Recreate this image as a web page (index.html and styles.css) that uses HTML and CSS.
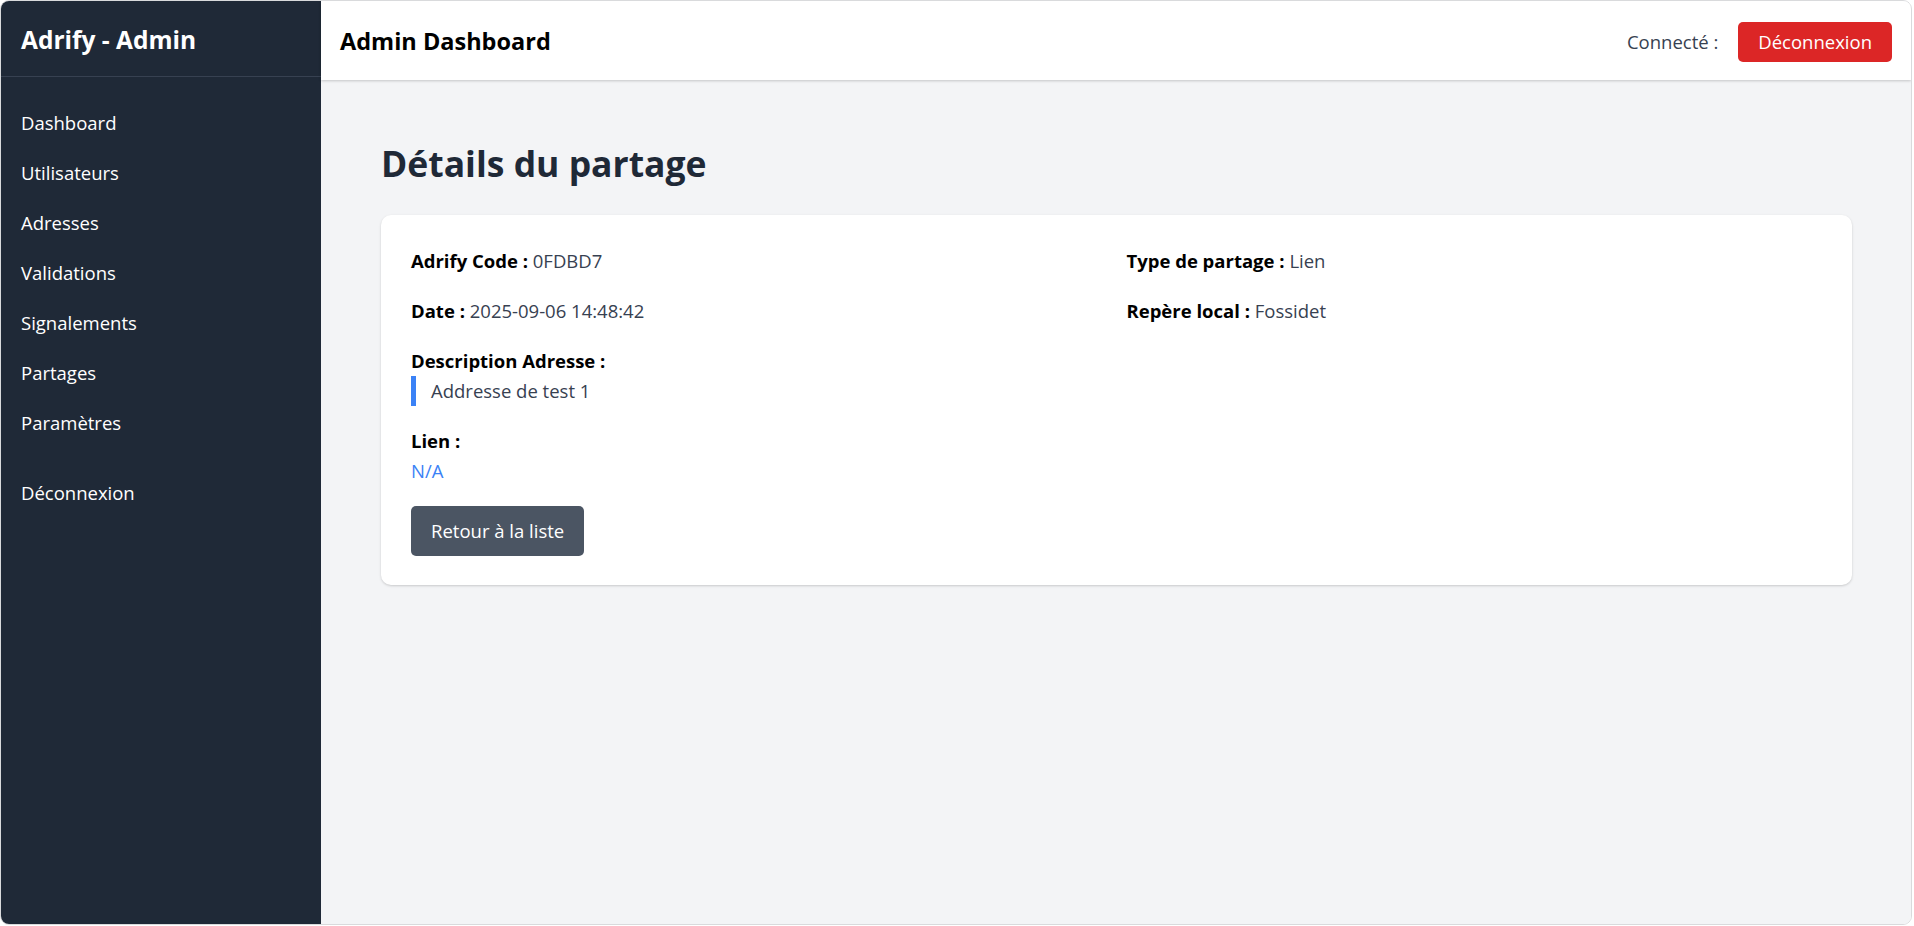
FILE: index.html
```html
<!DOCTYPE html>
<html lang="fr">
<head>
<meta charset="utf-8">
<title>Adrify - Admin</title>
<link rel="stylesheet" href="styles.css">
</head>
<body>
<div class="window">
  <aside class="sidebar">
    <div class="brand">Adrify - Admin</div>
    <nav class="nav">
      <a class="nav-link" href="#">Dashboard</a>
      <a class="nav-link" href="#">Utilisateurs</a>
      <a class="nav-link" href="#">Adresses</a>
      <a class="nav-link" href="#">Validations</a>
      <a class="nav-link" href="#">Signalements</a>
      <a class="nav-link" href="#">Partages</a>
      <a class="nav-link" href="#">Paramètres</a>
      <a class="nav-link nav-logout" href="#">Déconnexion</a>
    </nav>
  </aside>
  <div class="main-col">
    <header class="topbar">
      <h1 class="topbar-title">Admin Dashboard</h1>
      <div class="topbar-right">
        <span class="connected">Connecté :</span>
        <button class="btn btn-red">Déconnexion</button>
      </div>
    </header>
    <main class="content">
      <h2 class="page-title">Détails du partage</h2>
      <section class="card">
        <div class="grid">
          <p class="field"><span class="label">Adrify Code :</span> <span class="value">0FDBD7</span></p>
          <p class="field"><span class="label">Type de partage :</span> <span class="value">Lien</span></p>
          <p class="field"><span class="label">Date :</span> <span class="value">2025-09-06 14:48:42</span></p>
          <p class="field"><span class="label">Repère local :</span> <span class="value">Fossidet</span></p>
          <div class="field span2">
            <div class="label">Description Adresse :</div>
            <blockquote class="quote">Addresse de test 1</blockquote>
          </div>
          <div class="field span2">
            <div class="label">Lien :</div>
            <a class="link" href="#">N/A</a>
          </div>
          <div class="span2">
            <button class="btn btn-gray">Retour à la liste</button>
          </div>
        </div>
      </section>
    </main>
  </div>
</div>
</body>
</html>
```

FILE: styles.css
```css
* { box-sizing: border-box; }
html, body { margin: 0; padding: 0; }
body {
  background: #ffffff;
  font-family: "Open Sans", "Noto Sans", "Liberation Sans", sans-serif;
  font-size: 18.5px;
  line-height: 30px;
  color: #000;
}
.window {
  width: 1912px;
  height: 925px;
  border: 1px solid #d9dadc;
  border-radius: 9px;
  overflow: hidden;
  display: flex;
}
.sidebar {
  width: 320px;
  flex: none;
  background: #1f2937;
  color: #fff;
  display: flex;
  flex-direction: column;
}
.brand {
  padding: 21px 20px 19px 20px;
  font-size: 24.5px;
  line-height: 35px;
  font-weight: 700;
  border-bottom: 1px solid #374151;
}
.nav {
  display: flex;
  flex-direction: column;
  padding: 21px 20px 20px 20px;
}
.nav-link {
  color: #fff;
  text-decoration: none;
  padding: 10px 0;
  font-size: 18.5px;
  line-height: 30px;
}
.nav-logout { margin-top: 20px; }
.main-col {
  flex: 1;
  display: flex;
  flex-direction: column;
  background: #f3f4f6;
  min-width: 0;
}
.topbar {
  background: #fff;
  height: 79px;
  flex: none;
  display: flex;
  align-items: center;
  justify-content: space-between;
  padding: 2px 19px 0 19px;
  box-shadow: 0 1px 3px rgba(0,0,0,0.12), 0 1px 2px rgba(0,0,0,0.08);
  position: relative;
}
.topbar-title {
  margin: 0;
  font-size: 23.5px;
  line-height: 35px;
  font-weight: 700;
  color: #000;
}
.topbar-right {
  display: flex;
  align-items: center;
  gap: 20px;
}
.connected {
  color: #374151;
  font-size: 18.5px;
}
.btn {
  border: none;
  border-radius: 5px;
  font-family: inherit;
  font-size: 18.5px;
  color: #fff;
  cursor: pointer;
}
.btn-red {
  background: #dc2626;
  height: 40px;
  padding: 0 20px;
  line-height: 40px;
}
.content {
  padding: 61px 59px 60px 60px;
}
.page-title {
  margin: 0 0 29px 0;
  font-size: 35.5px;
  line-height: 45px;
  font-weight: 700;
  color: #1f2937;
}
.card {
  background: #fff;
  border-radius: 10px;
  box-shadow: 0 1px 3px rgba(0,0,0,0.12), 0 1px 2px rgba(0,0,0,0.06);
  padding: 31px 30px 29px 30px;
}
.grid {
  display: grid;
  grid-template-columns: 1fr 1fr;
  gap: 20px;
}
.span2 { grid-column: span 2; }
.field { margin: 0; }
.label {
  font-weight: 700;
  color: #000;
}
.value { color: #374151; }
.quote {
  margin: 0;
  border-left: 5px solid #3b82f6;
  padding-left: 15px;
  color: #374151;
}
.link {
  color: #3b82f6;
  text-decoration: none;
}
.btn-gray {
  background: #4b5563;
  height: 50px;
  padding: 0 20px;
  line-height: 50px;
}
```
